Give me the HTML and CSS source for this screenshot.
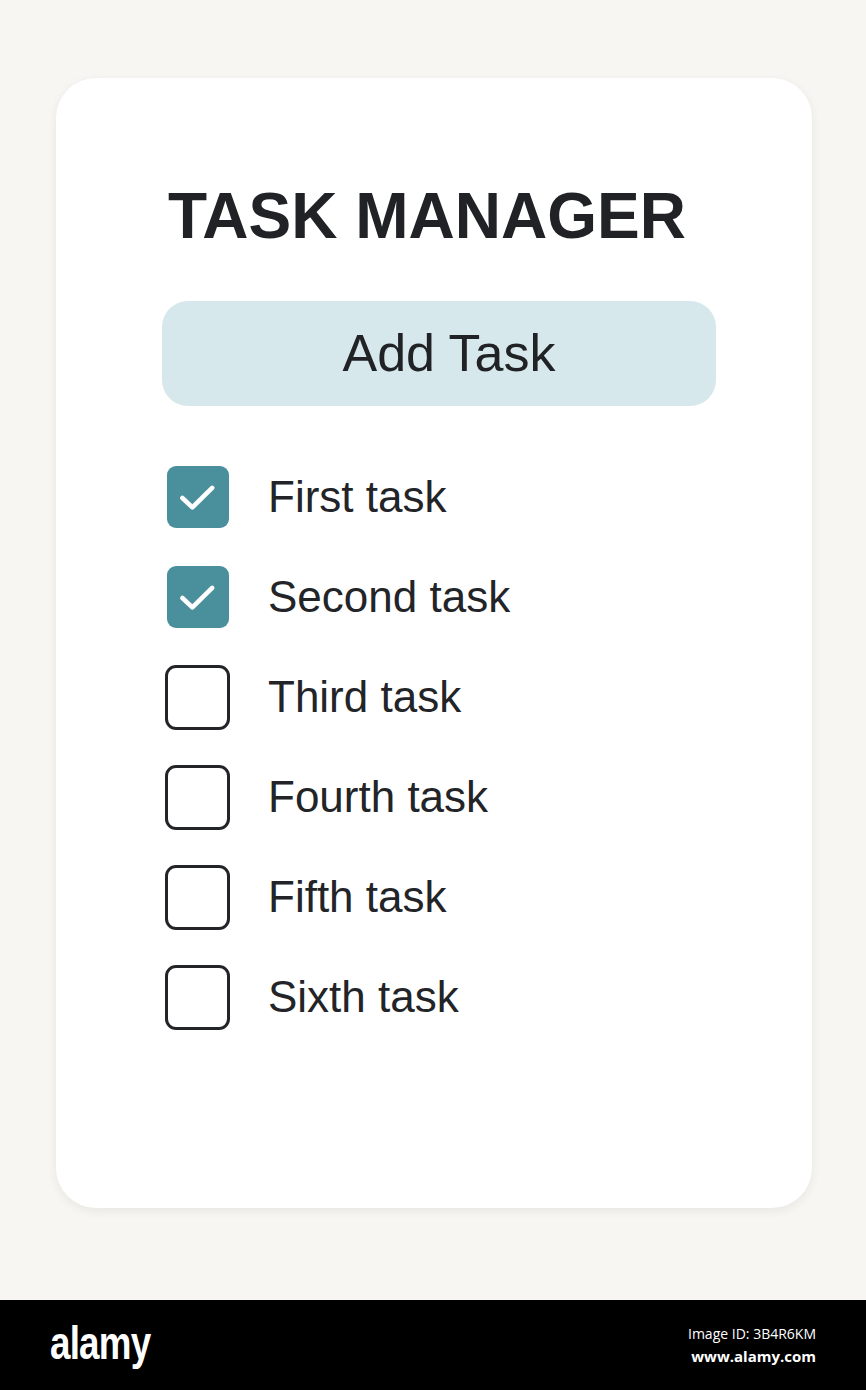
FILE: index.html
```html
<!DOCTYPE html>
<html>
  <head>
    <title>Task Manager</title>
    <link rel="stylesheet" href="styles.css">
  </head>
  <body>
    <div class="stage">
      <div class="card">
        <h1 class="title">TASK MANAGER</h1>
        <button class="add-btn">Add Task</button>
        <ul class="tasks">
          <li class="task done">
            <span class="box">
              <svg viewBox="0 0 24 24" width="50" height="50" fill="none" stroke="#ffffff" stroke-width="2.2" stroke-linecap="round" stroke-linejoin="round">
                <polyline points="4.5 12.5 9.3 17 18.8 7.6" />
              </svg>
            </span>
            <span class="label">First task</span>
          </li>
          <li class="task done">
            <span class="box">
              <svg viewBox="0 0 24 24" width="50" height="50" fill="none" stroke="#ffffff" stroke-width="2.2" stroke-linecap="round" stroke-linejoin="round">
                <polyline points="4.5 12.5 9.3 17 18.8 7.6" />
              </svg>
            </span>
            <span class="label">Second task</span>
          </li>
          <li class="task">
            <span class="box"></span>
            <span class="label">Third task</span>
          </li>
          <li class="task">
            <span class="box"></span>
            <span class="label">Fourth task</span>
          </li>
          <li class="task">
            <span class="box"></span>
            <span class="label">Fifth task</span>
          </li>
          <li class="task">
            <span class="box"></span>
            <span class="label">Sixth task</span>
          </li>
        </ul>
      </div>
    </div>
    <div class="footer">
      <div class="logo">alamy</div>
      <div class="meta">
        <div class="image-id">Image ID: 3B4R6KM</div>
        <div class="site">www.alamy.com</div>
      </div>
    </div>
  </body>
</html>
```

FILE: styles.css
```css
body {
  margin: 0;
  background: #f7f6f2;
  font-family: "Liberation Sans", Arial, sans-serif;
  color: #202226;
}
.stage {
  height: 1300px;
  padding: 78px 0 0 56px;
  box-sizing: border-box;
}
.card {
  width: 756px;
  height: 1130px;
  box-sizing: border-box;
  padding: 106px 0 0 106px;
  background: #ffffff;
  border-radius: 40px;
  box-shadow: 0 3px 10px rgba(60, 55, 40, 0.08);
}
.title {
  margin: 0 0 53px 6px;
  font-size: 64px;
  line-height: 64px;
  font-weight: bold;
}
.add-btn {
  display: block;
  width: 554px;
  height: 105px;
  border: none;
  border-radius: 26px;
  background: #d6e8ec;
  color: #202226;
  font-family: inherit;
  font-size: 52px;
  padding: 0 0 2px 20px;
  cursor: pointer;
}
.tasks {
  list-style: none;
  margin: 59px 0 0 3px;
  padding: 0;
  display: flex;
  flex-direction: column;
  gap: 36px;
}
.task {
  display: flex;
  align-items: center;
  gap: 38px;
  height: 64px;
}
.box {
  width: 65px;
  height: 65px;
  box-sizing: border-box;
  border: 3px solid #222428;
  border-radius: 11px;
  display: flex;
  align-items: center;
  justify-content: center;
}
.task.done .box {
  width: 62px;
  height: 62px;
  margin: 0 1px 0 2px;
  border: none;
  border-radius: 9px;
  background: #4a909c;
}
.label {
  font-size: 44px;
  line-height: 64px;
  color: #222428;
}
.footer {
  height: 90px;
  background: #000000;
  display: flex;
  align-items: center;
  justify-content: space-between;
  padding: 0 50px 0 50px;
}
.logo {
  color: #ffffff;
  font-size: 46px;
  font-weight: bold;
  letter-spacing: -1px;
  transform: scaleX(0.8);
  transform-origin: left center;
  margin-top: -4px;
}
.meta {
  font-family: "Open Sans", sans-serif;
  color: #ffffff;
  text-align: right;
  line-height: 22px;
}
.image-id {
  font-size: 14px;
}
.site {
  font-size: 15px;
  font-weight: bold;
}
```
